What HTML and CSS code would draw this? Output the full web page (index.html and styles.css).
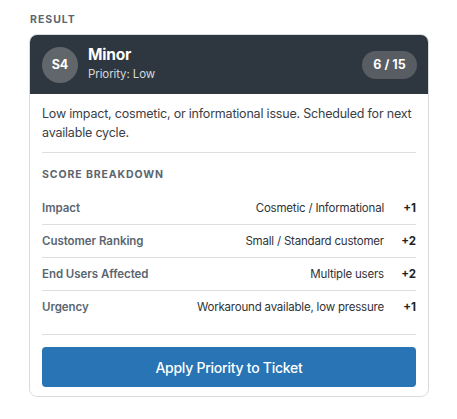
FILE: index.html
```html
<!doctype html>
<html>
<head>
<meta charset="utf-8">
<title>Result</title>
<link rel="stylesheet" href="styles.css">
</head>
<body>
<div class="wrap">
	<h5 class="label">Result</h5>
	<div class="card">
		<div class="card-head">
			<div class="badge">S4</div>
			<div class="head-text">
				<h3>Minor</h3>
				<p>Priority: Low</p>
			</div>
			<div class="score">6 / 15</div>
		</div>
		<div class="card-body">
			<p class="desc">Low impact, cosmetic, or informational issue. Scheduled for next available cycle.</p>
			<h5 class="sub">Score Breakdown</h5>
			<ul class="rows">
				<li><span class="name">Impact</span><span class="val">Cosmetic / Informational</span><span class="pts">+1</span></li>
				<li><span class="name">Customer Ranking</span><span class="val">Small / Standard customer</span><span class="pts">+2</span></li>
				<li><span class="name">End Users Affected</span><span class="val">Multiple users</span><span class="pts">+2</span></li>
				<li><span class="name">Urgency</span><span class="val">Workaround available, low pressure</span><span class="pts">+1</span></li>
			</ul>
			<div class="foot">
				<button class="btn">Apply Priority to Ticket</button>
			</div>
		</div>
	</div>
</div>
</body>
</html>
```

FILE: styles.css
```css
*{margin:0;padding:0;box-sizing:border-box}
body{background:#fff;font-family:Inter,"Liberation Sans",sans-serif;color:#2f3338}
.wrap{width:400px;margin:14px 0 0 29px}
.label{font-size:10.5px;font-weight:700;letter-spacing:1px;text-transform:uppercase;color:#5b6670;line-height:12px;margin:0 0 8px 1px}
.card{border:1px solid #d9dcdf;border-radius:8px;overflow:hidden;background:#fff}
.card-head{background:#2e3740;height:59px;display:flex;align-items:center;padding:0 11px 0 12px;color:#fff}
.badge{width:36px;height:36px;border-radius:50%;background:#61666b;display:flex;align-items:center;justify-content:center;font-size:12.5px;font-weight:700}
.head-text{flex:1;margin-left:10px}
.head-text h3{font-size:15.5px;font-weight:700;line-height:19px;margin-top:-3px;letter-spacing:-.2px}
.head-text p{font-size:11.5px;line-height:14px;color:#d6d9dc;margin-top:3px;letter-spacing:-.1px}
.score{background:#575d63;border-radius:14px;height:28px;width:55px;display:flex;align-items:center;justify-content:center;font-size:12.5px;font-weight:700}
.card-body{padding:10px 12px 9px}
.desc{font-size:12.5px;line-height:19px;color:#3b4046;padding-bottom:10px;border-bottom:1px solid #dcdfe2;letter-spacing:-.2px}
.sub{font-size:10.5px;font-weight:700;letter-spacing:.9px;text-transform:uppercase;color:#5b6670;line-height:14px;margin:15px 0 10px}
.rows{list-style:none}
.rows li{display:flex;align-items:center;height:33px;border-bottom:1px solid #dcdfe2;font-size:11.5px}
.rows li:last-child{border-bottom:none;height:32px}
.rows .name{flex:1;font-weight:600;color:#5b6670;letter-spacing:-.05px}
.rows .val{color:#2f3338;letter-spacing:-.2px}
.rows .pts{width:32px;text-align:right;font-weight:700;color:#1f2328}
.foot{margin-top:11px;border-top:1px solid #dcdfe2;padding-top:12px}
.btn{display:block;width:100%;height:40px;border:none;border-radius:4px;background:#2874b4;color:#fff;font-family:inherit;font-size:14px;font-weight:500;letter-spacing:-.25px}
```
